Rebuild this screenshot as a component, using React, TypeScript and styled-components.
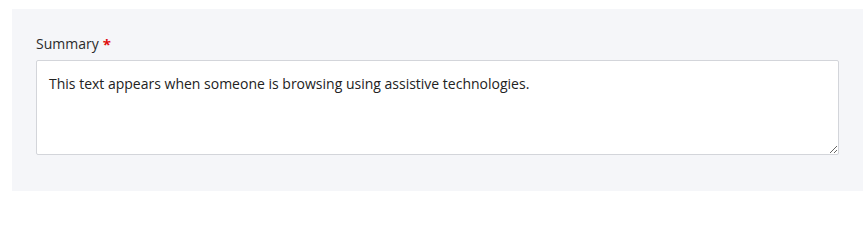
import React from "react";
import styled, { createGlobalStyle } from "styled-components";

const GlobalStyle = createGlobalStyle`
  html, body {
    margin: 0;
    padding: 0;
    background: #ffffff;
  }
  body {
    font-family: "Open Sans", "Noto Sans", sans-serif;
  }
`;

const Page = styled.div`
  padding: 9px 2px 12px 12px;
`;

const Panel = styled.div`
  background: #f5f6f9;
  padding: 26px 24px 36px 24px;
  display: flex;
  flex-direction: column;
  gap: 7px;
`;

const Label = styled.label`
  font-size: 14px;
  line-height: 18px;
  color: #2b2b2b;
  display: flex;
  align-items: flex-start;
  gap: 4px;
`;

const Required = styled.span`
  color: #e00f0f;
  font-size: 15px;
  font-weight: 700;
`;

const TextArea = styled.textarea`
  box-sizing: border-box;
  width: 100%;
  height: 95px;
  margin: 0;
  padding: 13px 12px;
  border: 1px solid #d3d5da;
  border-radius: 2px;
  background: #ffffff;
  font-family: "Open Sans", "Noto Sans", sans-serif;
  font-size: 14px;
  line-height: 20px;
  color: #222222;
  resize: vertical;
  outline: none;
`;

const App = () => {
  return (
    <Page>
      <GlobalStyle />
      <Panel>
        <Label htmlFor="summary">
          Summary
          <Required>*</Required>
        </Label>
        <TextArea
          id="summary"
          defaultValue="This text appears when someone is browsing using assistive technologies."
        />
      </Panel>
    </Page>
  );
};

export default App;
